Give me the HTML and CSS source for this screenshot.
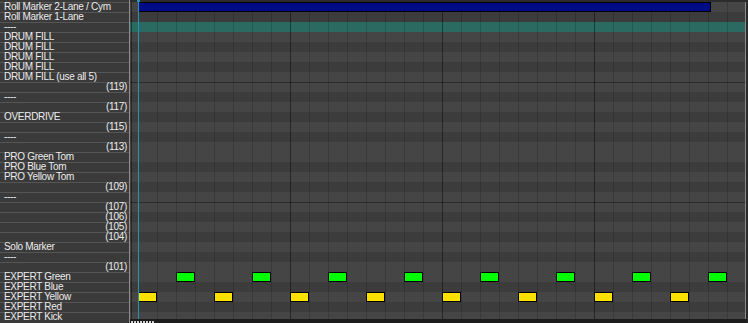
FILE: index.html
```html
<!DOCTYPE html>
<html>
<head>
<meta charset="utf-8">
<title>MIDI Editor</title>
<link rel="stylesheet" href="styles.css">
</head>
<body>
<div class="editor">
  <div class="keys">
    <div class="key">Roll Marker 2-Lane / Cym</div>
    <div class="key">Roll Marker 1-Lane</div>
    <div class="key">----</div>
    <div class="key">DRUM FILL</div>
    <div class="key">DRUM FILL</div>
    <div class="key">DRUM FILL</div>
    <div class="key">DRUM FILL</div>
    <div class="key">DRUM FILL (use all 5)</div>
    <div class="key num">(119)</div>
    <div class="key">----</div>
    <div class="key num">(117)</div>
    <div class="key">OVERDRIVE</div>
    <div class="key num">(115)</div>
    <div class="key">----</div>
    <div class="key num">(113)</div>
    <div class="key">PRO Green Tom</div>
    <div class="key">PRO Blue Tom</div>
    <div class="key">PRO Yellow Tom</div>
    <div class="key num">(109)</div>
    <div class="key">----</div>
    <div class="key num">(107)</div>
    <div class="key num">(106)</div>
    <div class="key num">(105)</div>
    <div class="key num">(104)</div>
    <div class="key">Solo Marker</div>
    <div class="key">----</div>
    <div class="key num">(101)</div>
    <div class="key">EXPERT Green</div>
    <div class="key">EXPERT Blue</div>
    <div class="key">EXPERT Yellow</div>
    <div class="key">EXPERT Red</div>
    <div class="key">EXPERT Kick</div>
  </div>
  <div class="grid">
    <div class="ruler"><span class="ph-mark"></span></div>
    <div class="lanes">
      <div class="lane w"><span class="note blue" style="left:8px;width:573px"></span></div>
      <div class="lane b"></div>
      <div class="lane sel"></div>
      <div class="lane w"></div>
      <div class="lane b"></div>
      <div class="lane w"></div>
      <div class="lane b"></div>
      <div class="lane w"></div>
      <div class="lane w oct"></div>
      <div class="lane b"></div>
      <div class="lane w"></div>
      <div class="lane b"></div>
      <div class="lane w"></div>
      <div class="lane b"></div>
      <div class="lane w"></div>
      <div class="lane w"></div>
      <div class="lane b"></div>
      <div class="lane w"></div>
      <div class="lane b"></div>
      <div class="lane w"></div>
      <div class="lane w oct"></div>
      <div class="lane b"></div>
      <div class="lane w"></div>
      <div class="lane b"></div>
      <div class="lane w"></div>
      <div class="lane b"></div>
      <div class="lane w"></div>
      <div class="lane w">
        <span class="note green" style="left:46px"></span>
        <span class="note green" style="left:122px"></span>
        <span class="note green" style="left:198px"></span>
        <span class="note green" style="left:274px"></span>
        <span class="note green" style="left:350px"></span>
        <span class="note green" style="left:426px"></span>
        <span class="note green" style="left:502px"></span>
        <span class="note green" style="left:578px"></span>
      </div>
      <div class="lane b"></div>
      <div class="lane w">
        <span class="note yellow" style="left:8px"></span>
        <span class="note yellow" style="left:84px"></span>
        <span class="note yellow" style="left:160px"></span>
        <span class="note yellow" style="left:236px"></span>
        <span class="note yellow" style="left:312px"></span>
        <span class="note yellow" style="left:388px"></span>
        <span class="note yellow" style="left:464px"></span>
        <span class="note yellow" style="left:540px"></span>
      </div>
      <div class="lane b"></div>
      <div class="lane w"></div>
      <div class="gridlines"></div>
      <div class="playhead"></div>
    </div>
    <div class="hscroll">
      <span class="dot"></span><span class="dot"></span><span class="dot"></span><span class="dot"></span>
      <span class="dot"></span><span class="dot"></span><span class="dot"></span><span class="dot"></span>
    </div>
  </div>
</div>
</body>
</html>
```

FILE: styles.css
```css
html, body {
  margin: 0;
  padding: 0;
  background: #2a2a2a;
}

.editor {
  display: flex;
  width: 748px;
  height: 323px;
  overflow: hidden;
  font-family: "Liberation Sans", Arial, sans-serif;
}

.keys {
  flex: 0 0 130px;
  box-sizing: border-box;
  padding-top: 2px;
  border-right: 1px solid #8e8e8e;
  background: #3a3a3a;
  display: flex;
  flex-direction: column;
}

.key {
  box-sizing: border-box;
  height: 10px;
  flex: 0 0 10px;
  border-top: 1px solid #555555;
  padding: 0 2px 0 4px;
  font-size: 10px;
  letter-spacing: -0.3px;
  line-height: 8px;
  color: #ececec;
  white-space: nowrap;
  overflow: visible;
}

.key.num {
  text-align: right;
}

.grid {
  flex: 0 0 617px;
  display: flex;
  flex-direction: column;
}

.ruler {
  position: relative;
  height: 2px;
  flex: 0 0 2px;
  background: #2c2c2c;
}

.ph-mark {
  position: absolute;
  left: 7px;
  top: 0;
  width: 3px;
  height: 2px;
  background: #2592b8;
}

.lanes {
  position: relative;
  height: 317px;
  flex: 0 0 317px;
  overflow: hidden;
  box-sizing: border-box;
  border-right: 1px solid #8a8a8a;
  margin-right: 1px;
}

.lane {
  position: relative;
  box-sizing: border-box;
  height: 10px;
}

.lane.w { background: #454545; }
.lane.b { background: #3c3c3c; }
.lane.sel { background: #2a6a61; }
.lane.oct { border-top: 1px solid #2b2b2b; }

.gridlines {
  position: absolute;
  inset: 0;
  z-index: 1;
  background-image:
    repeating-linear-gradient(to right, rgba(0,0,0,0.32) 0 1px, transparent 1px 152px),
    repeating-linear-gradient(to right, rgba(0,0,0,0.16) 0 1px, transparent 1px 19px);
  background-position: 8px 0, 8px 0;
}

.note {
  position: absolute;
  top: 0;
  z-index: 2;
  box-sizing: border-box;
  height: 10px;
  width: 19px;
  border: 1px solid #000;
}

.note.blue { background: #000c86; }
.note.green { background: #00ff00; }
.note.yellow { background: #fce100; }

.playhead {
  position: absolute;
  left: 8px;
  top: 0;
  bottom: 0;
  width: 1px;
  z-index: 3;
  background: #2592b8;
}

.hscroll {
  flex: 1;
  background: #1d1d1d;
  display: flex;
  align-items: flex-end;
  gap: 1px;
  padding: 0 0 0 1px;
}

.dot {
  width: 2px;
  height: 2px;
  margin-bottom: 0;
  background: #cfcfcf;
}
```
